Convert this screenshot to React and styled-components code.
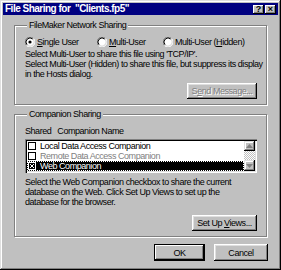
import { styled, createGlobalStyle } from "styled-components";

const GlobalStyle = createGlobalStyle`
  html, body {
    margin: 0;
    padding: 0;
    background: #c0c0c0;
  }
  * {
    box-sizing: border-box;
  }
`;

const FONT = `"Liberation Sans", Arial, sans-serif`;

const Radio = ({ checked }) => (
  <svg width="10" height="10" viewBox="0 0 10 10">
    <circle cx="5" cy="5" r="4" fill="#fff" />
    <path d="M1.5 8.5 A4.9 4.9 0 0 1 8.5 1.5" fill="none" stroke="#808080" strokeWidth="1" />
    <path d="M8.5 1.5 A4.9 4.9 0 0 1 1.5 8.5" fill="none" stroke="#fff" strokeWidth="1" />
    <path d="M2.2 7.8 A3.9 3.9 0 0 1 7.8 2.2" fill="none" stroke="#000" strokeWidth="1" />
    <path d="M7.8 2.2 A3.9 3.9 0 0 1 2.2 7.8" fill="none" stroke="#dfdfdf" strokeWidth="1" />
    {checked && <circle cx="5" cy="5" r="1.6" fill="#000" />}
  </svg>
);

const CheckBox = ({ checked, inverted }) => (
  <svg width="8" height="8" viewBox="0 0 8 8">
    <rect x="0.5" y="0.5" width="7" height="7" fill={inverted ? "#000" : "#fff"} stroke={inverted ? "#fff" : "#000"} />
    {checked && (
      <path d="M2 2 L6 6 M6 2 L2 6" stroke={inverted ? "#fff" : "#000"} strokeWidth="1" />
    )}
  </svg>
);

const Arrow = ({ down }) => (
  <svg width="7" height="4" viewBox="0 0 7 4">
    <path d={down ? "M0 0 H7 L3.5 4 Z" : "M0 4 H7 L3.5 0 Z"} fill="#808080" />
  </svg>
);

const App = () => {
  return (
    <>
      <GlobalStyle />
      <Window>
        <TitleBar>
          <Title>File Sharing for &nbsp;"Clients.fp5"</Title>
          <CaptionButtons>
            <CaptionButton>?</CaptionButton>
            <CaptionButton>×</CaptionButton>
          </CaptionButtons>
        </TitleBar>
        <Body>
          <Group>
            <Legend>FileMaker Network Sharing</Legend>
            <RadioRow>
              <RadioItem $width={72}>
                <Radio checked />
                <span><u>S</u>ingle User</span>
              </RadioItem>
              <RadioItem $width={66}>
                <Radio />
                <span><u>M</u>ulti-User</span>
              </RadioItem>
              <RadioItem>
                <Radio />
                <span>Multi-User (<u>H</u>idden)</span>
              </RadioItem>
            </RadioRow>
            <Text>
              Select Multi-User to share this file using 'TCP/IP'.
              <br />
              Select Multi-User (Hidden) to share this file, but suppress its display
              <br />
              in the Hosts dialog.
            </Text>
            <ButtonRow>
              <Button $width={70} disabled>
                S<u>e</u>nd Message...
              </Button>
            </ButtonRow>
          </Group>

          <Group $second>
            <Legend>Companion Sharing</Legend>
            <Header>
              <span>Shared</span>
              <span>Companion Name</span>
            </Header>
            <ListBox>
              <Rows>
                <Row>
                  <CheckBox />
                  <span>Local Data Access Companion</span>
                </Row>
                <Row $disabled>
                  <CheckBox />
                  <span>Remote Data Access Companion</span>
                </Row>
                <Row $selected>
                  <CheckBox checked inverted />
                  <span>Web Companion</span>
                </Row>
              </Rows>
              <ScrollBar>
                <ScrollButton $h={10}>
                  <Arrow />
                </ScrollButton>
                <Track />
                <ScrollButton $h={11}>
                  <Arrow down />
                </ScrollButton>
              </ScrollBar>
            </ListBox>
            <Text $top={4}>
              Select the Web Companion checkbox to share the current
              <br />
              database on the Web. Click Set Up Views to set up the
              <br />
              database for the browser.
            </Text>
            <ButtonRow $top={8}>
              <Button $width={65}>
                Set Up <u>V</u>iews...
              </Button>
            </ButtonRow>
          </Group>

          <Footer>
            <DefaultButton>OK</DefaultButton>
            <Button $width={54} $height={17}>Cancel</Button>
          </Footer>
        </Body>
      </Window>
    </>
  );
};

const Window = styled.div`
  width: 281px;
  height: 270px;
  padding: 3px;
  background: #c0c0c0;
  box-shadow: inset -1px -1px #000, inset 1px 1px #dfdfdf, inset -2px -2px #808080,
    inset 2px 2px #fff;
  font-family: ${FONT};
  font-size: 9px;
  letter-spacing: -0.45px;
  color: #000;
  display: flex;
  flex-direction: column;
`;

const TitleBar = styled.div`
  height: 12px;
  background: #000080;
  display: flex;
  align-items: center;
  justify-content: space-between;
  padding: 0 2px 0 2px;
`;

const Title = styled.div`
  color: #fff;
  font-weight: 700;
  font-size: 10px;
  letter-spacing: -0.5px;
  line-height: 12px;
  white-space: nowrap;
`;

const CaptionButtons = styled.div`
  display: flex;
  gap: 1px;
`;

const CaptionButton = styled.div`
  width: 11px;
  height: 9px;
  background: #c0c0c0;
  box-shadow: inset -1px -1px #000, inset 1px 1px #fff, inset -2px -2px #808080;
  font-weight: 700;
  font-size: 9px;
  letter-spacing: 0;
  line-height: 9px;
  text-align: center;
  color: #000;
`;

const Body = styled.div`
  padding: 5px 11px 0 11px;
  display: flex;
  flex-direction: column;
`;

const Group = styled.fieldset`
  margin: ${(p) => (p.$second ? "4px" : "0")} 0 0 0;
  padding: ${(p) => (p.$second ? "1px" : "6px")} 9px 5px 10px;
  border: 1px solid #808080;
  box-shadow: inset 1px 1px 0 #fff, 1px 1px 0 #fff;
  min-width: 0;
  display: flex;
  flex-direction: column;
`;

const Legend = styled.legend`
  padding: 0 2px;
  margin-left: 2px;
  line-height: 10px;
  background: #c0c0c0;
`;

const RadioRow = styled.div`
  display: flex;
  align-items: center;
  height: 11px;
`;

const RadioItem = styled.label`
  display: flex;
  align-items: center;
  gap: 2px;
  width: ${(p) => (p.$width ? `${p.$width}px` : "auto")};
  line-height: 10px;
  white-space: nowrap;
`;

const Text = styled.div`
  margin-top: ${(p) => (p.$top ?? 2)}px;
  line-height: 10px;
  white-space: nowrap;
`;

const ButtonRow = styled.div`
  display: flex;
  justify-content: flex-end;
  margin-top: ${(p) => (p.$top ?? 4)}px;
`;

const Button = styled.button`
  width: ${(p) => p.$width}px;
  height: ${(p) => p.$height ?? 16}px;
  padding: 0;
  border: none;
  background: #c0c0c0;
  box-shadow: inset -1px -1px #000, inset 1px 1px #fff, inset -2px -2px #808080,
    inset 2px 2px #dfdfdf;
  font-family: ${FONT};
  font-size: 9px;
  letter-spacing: -0.45px;
  color: #000;
  white-space: nowrap;
  &:disabled {
    color: #808080;
    text-shadow: 1px 1px 0 #fff;
  }
`;

const DefaultButton = styled(Button).attrs({ $width: 51, $height: 17 })`
  outline: 1px solid #000;
  outline-offset: -1px;
  box-shadow: inset -2px -2px #000, inset 2px 2px #fff, inset -3px -3px #808080;
`;

const Header = styled.div`
  display: flex;
  gap: 6px;
  line-height: 10px;
  margin-top: 6px;
`;

const ListBox = styled.div`
  margin-top: 3px;
  height: 34px;
  display: flex;
  padding: 2px;
  background: #fff;
  box-shadow: inset 1px 1px #808080, inset 2px 2px #000, inset -1px -1px #fff,
    inset -2px -2px #dfdfdf;
`;

const Rows = styled.div`
  flex: 1;
  display: flex;
  flex-direction: column;
`;

const Row = styled.div`
  height: 10px;
  display: flex;
  align-items: center;
  gap: 4px;
  padding-left: 1px;
  line-height: 10px;
  white-space: nowrap;
  color: ${(p) => (p.$selected ? "#fff" : p.$disabled ? "#808080" : "#000")};
  background: ${(p) => (p.$selected ? "#000" : "transparent")};
  outline: ${(p) => (p.$selected ? "1px dotted #fff" : "none")};
  outline-offset: -1px;
`;

const ScrollBar = styled.div`
  width: 11px;
  display: flex;
  flex-direction: column;
`;

const ScrollButton = styled.div`
  height: ${(p) => p.$h}px;
  background: #c0c0c0;
  box-shadow: inset -1px -1px #000, inset 1px 1px #dfdfdf, inset -2px -2px #808080,
    inset 2px 2px #fff;
  display: flex;
  align-items: center;
  justify-content: center;
`;

const Track = styled.div`
  flex: 1;
  background: repeating-conic-gradient(#c0c0c0 0 25%, #fff 0 50%) 0 0 / 2px 2px;
`;

const Footer = styled.div`
  display: flex;
  justify-content: flex-end;
  gap: 9px;
  margin-top: 7px;
  margin-right: -1px;
`;

export default App;
